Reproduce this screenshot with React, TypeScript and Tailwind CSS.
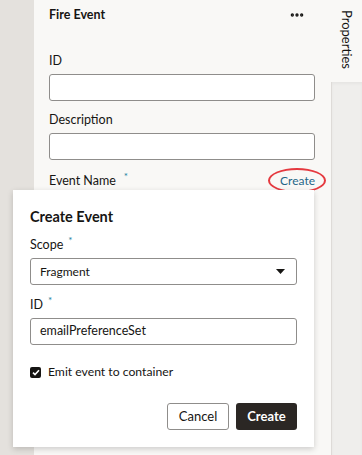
import { MoreHorizontal } from "lucide-react";

const font = { fontFamily: 'Lato, "Noto Sans", sans-serif' };

function Field({ label, required, children }: { label: string; required?: boolean; children?: React.ReactNode }) {
  return (
    <div className="flex flex-col">
      <div className="flex items-start h-[20px] text-[12.5px] leading-[20px] text-[#161513]">
        <span>{label}</span>
        {required && <span className="ml-[5px] text-[10px] leading-[10px] text-[#227e9e]">*</span>}
      </div>
      {children}
    </div>
  );
}

export default function App() {
  return (
    <div className="relative flex w-[362px] h-[455px] overflow-hidden bg-[#e4e1dd]" style={font}>
      <div className="w-[34px] shrink-0" />

      <div className="w-[297px] shrink-0 bg-[#f9f8f6] pl-[15px] pr-[16px] pt-[5px]">
        <div className="flex items-center justify-between h-[20px]">
          <span className="text-[12.5px] font-bold text-[#161513]">Fire Event</span>
          <MoreHorizontal size={16} strokeWidth={3} className="mr-[10px] text-[#161513]" />
        </div>

        <div className="mt-[26px] flex flex-col gap-[9px]">
          <Field label="ID">
            <div className="mt-[3px] h-[27px] rounded-[3px] border border-[#8f8d8b] bg-white" />
          </Field>
          <Field label="Description">
            <div className="mt-[3px] h-[27px] rounded-[3px] border border-[#8f8d8b] bg-white" />
          </Field>
          <div className="mt-[2px] flex items-start justify-between leading-[20px]">
            <div className="flex items-start text-[12.5px] text-[#161513]">
              <span>Event Name</span>
              <span className="ml-[8px] text-[10px] leading-[10px] text-[#227e9e]">*</span>
            </div>
            <span className="relative text-[12px] text-[#1f6688]">
              Create
              <span className="absolute left-[-12px] top-[-3px] w-[58px] h-[25px] rounded-[50%] border-2 border-[#e5393f]" />
            </span>
          </div>
        </div>
      </div>

      <div className="flex-1 flex flex-col bg-[#f9f8f6]">
        <div className="h-[82px] flex justify-center pt-[10px]">
          <span className="[writing-mode:vertical-rl] text-[13px] text-[#161513]">Properties</span>
        </div>
        <div className="flex-1 border-l border-[#dedbd8] bg-[#efeeec] shadow-[inset_0_2px_3px_rgba(0,0,0,0.04)]" />
      </div>

      <div className="absolute left-[13px] top-[190px] w-[301px] h-[257px] bg-white shadow-[0_2px_6px_rgba(0,0,0,0.18)] px-[17px] pt-[16px]">
        <div className="text-[14.5px] font-bold text-[#161513] leading-[22px]">Create Event</div>

        <div className="mt-[7px] flex flex-col gap-[10px]">
          <Field label="Scope" required>
            <div className="mt-[3px] h-[27px] rounded-[3px] border border-[#8f8d8b] bg-white flex items-center justify-between pl-[9px] pr-[11px] text-[12px] text-[#161513]">
              <span>Fragment</span>
              <svg width="9" height="5" viewBox="0 0 9 5"><path d="M0 0h9L4.5 5z" fill="#161513" /></svg>
            </div>
          </Field>
          <Field label="ID" required>
            <div className="mt-[3px] h-[27px] rounded-[3px] border border-[#8f8d8b] bg-white flex items-center pl-[9px] text-[12.5px] text-[#161513]">
              emailPreferenceSet
            </div>
          </Field>
        </div>

        <div className="mt-[17px] flex items-center gap-[7px] h-[20px] text-[12.2px] text-[#161513]">
          <span className="w-[11px] h-[11px] rounded-[2px] bg-[#161513] flex items-center justify-center">
            <svg width="8" height="7" viewBox="0 0 8 7"><path d="M1 3.6l2 2L7 1.2" stroke="white" strokeWidth="1.6" fill="none" /></svg>
          </span>
          <span>Emit event to container</span>
        </div>

        <div className="mt-[21px] flex justify-end gap-[7px]">
          <button className="w-[62px] h-[27px] rounded-[3px] border border-[#8f8d8b] bg-white text-[13px] text-[#161513]">Cancel</button>
          <button className="w-[61px] h-[27px] rounded-[3px] bg-[#2b2724] text-[13px] font-bold text-white">Create</button>
        </div>
      </div>
    </div>
  );
}
